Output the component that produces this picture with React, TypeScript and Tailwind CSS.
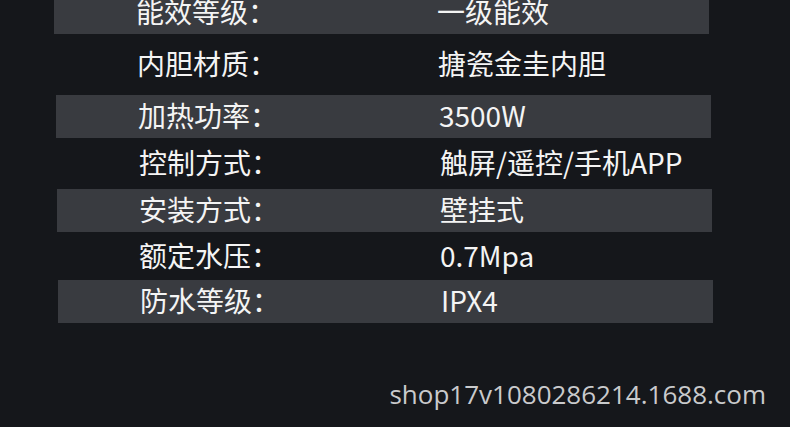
import React from "react";

type Spec = { label: string; value: string; band: boolean; h: number; ml: number; w: number; mt?: number };

// Rows drift a pixel or two to the right as they go down, as in the photo.
const specs: Spec[] = [
  { label: "能效等级：", value: "一级能效", band: true, h: 43, ml: 54, w: 655, mt: -9 },
  { label: "内胆材质：", value: "搪瓷金圭内胆", band: false, h: 61, ml: 55, w: 655 },
  { label: "加热功率：", value: "3500W", band: true, h: 43, ml: 56, w: 655 },
  { label: "控制方式：", value: "触屏/遥控/手机APP", band: false, h: 51, ml: 57, w: 655 },
  { label: "安装方式：", value: "壁挂式", band: true, h: 43, ml: 57, w: 655 },
  { label: "额定水压：", value: "0.7Mpa", band: false, h: 48, ml: 57, w: 655 },
  { label: "防水等级：", value: "IPX4", band: true, h: 43, ml: 58, w: 655 },
];

export default function App() {
  return (
    <div
      className="w-[790px] h-[427px] overflow-hidden bg-[#15171b] text-white flex flex-col"
      style={{ fontFamily: '"Noto Sans CJK SC", "Noto Sans", sans-serif' }}
    >
      <div className="flex flex-col">
        {specs.map((s, i) => (
          <div
            key={i}
            className={`flex items-center shrink-0 pb-[3px] ${s.band ? "bg-[#393b40]" : ""}`}
            style={{ height: s.h, marginLeft: s.ml, width: s.w, marginTop: s.mt ?? 0 }}
          >
            <div className="text-[28px] leading-none text-[#f4f4f4] w-[383px] pl-[82px] shrink-0">
              {s.label}
            </div>
            <div className="text-[28px] leading-none text-[#f4f4f4]">{s.value}</div>
          </div>
        ))}
      </div>
      <div className="flex-1 flex items-end justify-end pr-[24px] pb-[20px]">
        <span
          className="text-[26px] leading-none text-[#c9cacc]"
          style={{ fontFamily: '"Open Sans", sans-serif' }}
        >
          shop17v1080286214.1688.com
        </span>
      </div>
    </div>
  );
}
